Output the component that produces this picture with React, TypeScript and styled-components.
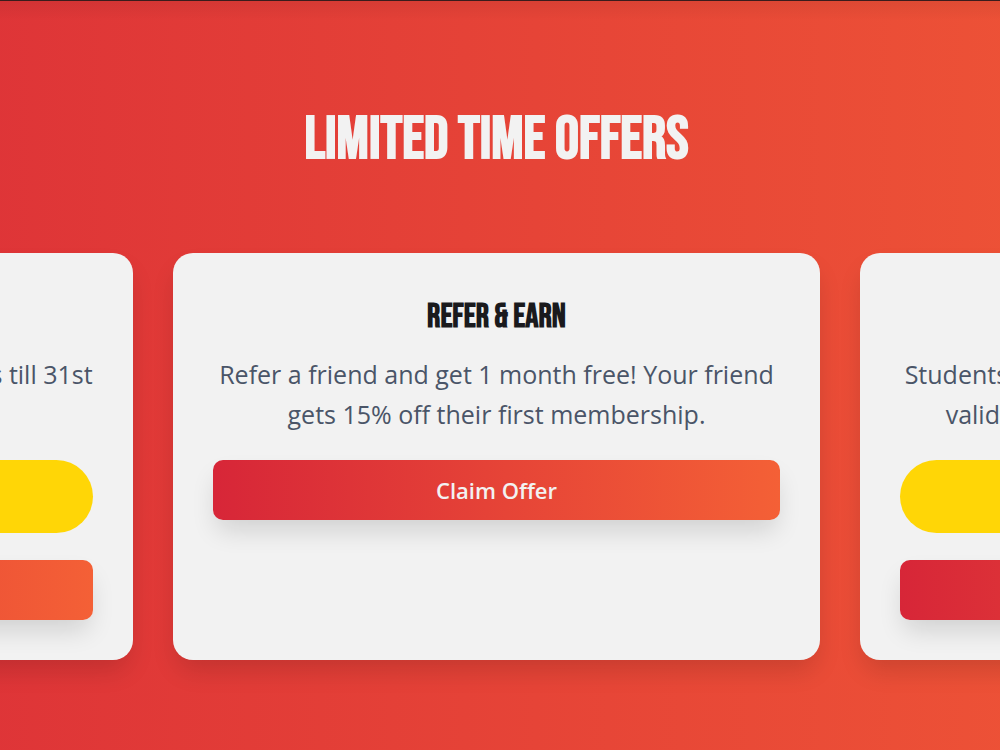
import React from "react";
import styled, { createGlobalStyle } from "styled-components";

const GlobalStyle = createGlobalStyle`
  *, *::before, *::after { box-sizing: border-box; }
  body {
    margin: 0;
    background: #e63f37;
    font-family: "Open Sans", "Noto Sans", sans-serif;
  }
`;

const display = `"Bebas Neue", Roboto, sans-serif`;

const Offers = styled.section`
  min-height: 100vh;
  padding: 99px 7px 91px 0;
  overflow: hidden;
  border-top: 1px solid #3a1c1c;
  background:
    linear-gradient(rgba(0, 0, 0, 0.06), transparent 20px),
    linear-gradient(90deg, #d72638 -54%, #f46036 154%);
`;

const Heading = styled.h2`
  margin: 0 0 73px;
  color: #f2f2f2;
  font: 700 60px/80px ${display};
  text-align: center;
  text-transform: uppercase;
`;

const Track = styled.div`
  display: grid;
  grid-template-columns: repeat(3, calc(100% - 346px));
  gap: 40px;
  justify-content: center;
`;

const Card = styled.article`
  display: flex;
  flex-direction: column;
  padding: 40px;
  border-radius: 20px;
  background: #f2f2f2;
  box-shadow: 0 14px 26px -4px rgba(0, 0, 0, 0.14);
  text-align: center;
`;

const Title = styled.h3`
  margin: 0 0 13px;
  color: #1a1a1d;
  font: 700 33px/48px ${display};
  text-transform: uppercase;
`;

const Details = styled.p`
  margin: 0 0 26px;
  color: #4a5568;
  font-size: 25px;
  line-height: 40px;
`;

const Coupon = styled.div`
  margin-bottom: 27px;
  padding: 16px 24px;
  border-radius: 40px;
  background: #ffd606;
  color: #1a1a1d;
  font-size: 24px;
  font-weight: 700;
  line-height: 41px;
`;

const ClaimButton = styled.button`
  padding: 0 24px;
  border: 0;
  border-radius: 10px;
  background: linear-gradient(90deg, #d72638, #f46036);
  box-shadow: 0 14px 26px -4px rgba(0, 0, 0, 0.14);
  color: #f2f2f2;
  font-family: inherit;
  font-size: 22px;
  font-weight: 600;
  line-height: 60px;
  cursor: pointer;
`;

type Offer = { title: string; lines: [string, string]; code?: string };

const offers: Offer[] = [
  {
    title: "New Year Special",
    lines: ["Take 50% off on our yearly memberships till 31st", "January for new members."],
    code: "NEWYEAR50",
  },
  {
    title: "Refer & Earn",
    lines: ["Refer a friend and get 1 month free! Your friend", "gets 15% off their first membership."],
  },
  {
    title: "Student Discount",
    lines: ["Students get 20% off for all memberships with a", "valid student ID card. Join the gym today."],
    code: "STUDENT20",
  },
];

export default function App() {
  return (
    <>
      <GlobalStyle />
      <Offers>
        <Heading>Limited Time Offers</Heading>
        <Track>
          {offers.map((offer) => (
            <Card key={offer.title}>
              <Title>{offer.title}</Title>
              <Details>
                {offer.lines[0]}
                <br />
                {offer.lines[1]}
              </Details>
              {offer.code && <Coupon>{offer.code}</Coupon>}
              <ClaimButton type="button">Claim Offer</ClaimButton>
            </Card>
          ))}
        </Track>
      </Offers>
    </>
  );
}
